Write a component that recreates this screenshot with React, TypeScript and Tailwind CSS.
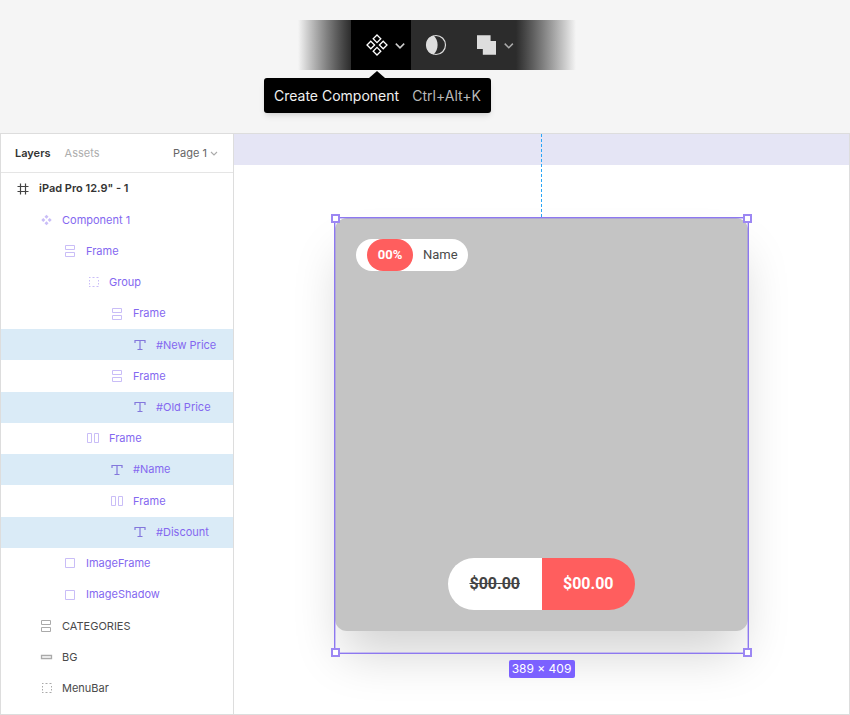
import React from "react";

type Kind = "hash" | "component" | "rows" | "cols" | "group" | "text" | "rect" | "bar";

type Layer = {
  name: string;
  kind: Kind;
  indent: string;
  tone: "frame" | "purple" | "plain";
  selected?: boolean;
};

const D0 = "pl-[14px]";
const D1 = "pl-[37px]";
const D2 = "pl-[61px]";
const D3 = "pl-[84px]";
const D4 = "pl-[108px]";
const D5 = "pl-[131px]";

const layers: Layer[] = [
  { name: 'iPad Pro 12.9" - 1', kind: "hash", indent: D0, tone: "frame" },
  { name: "Component 1", kind: "component", indent: D1, tone: "purple" },
  { name: "Frame", kind: "rows", indent: D2, tone: "purple" },
  { name: "Group", kind: "group", indent: D3, tone: "purple" },
  { name: "Frame", kind: "rows", indent: D4, tone: "purple" },
  { name: "#New Price", kind: "text", indent: D5, tone: "purple", selected: true },
  { name: "Frame", kind: "rows", indent: D4, tone: "purple" },
  { name: "#Old Price", kind: "text", indent: D5, tone: "purple", selected: true },
  { name: "Frame", kind: "cols", indent: D3, tone: "purple" },
  { name: "#Name", kind: "text", indent: D4, tone: "purple", selected: true },
  { name: "Frame", kind: "cols", indent: D4, tone: "purple" },
  { name: "#Discount", kind: "text", indent: D5, tone: "purple", selected: true },
  { name: "ImageFrame", kind: "rect", indent: D2, tone: "purple" },
  { name: "ImageShadow", kind: "rect", indent: D2, tone: "purple" },
  { name: "CATEGORIES", kind: "rows", indent: D1, tone: "plain" },
  { name: "BG", kind: "bar", indent: D1, tone: "plain" },
  { name: "MenuBar", kind: "group", indent: D1, tone: "plain" },
];

function LayerIcon({ kind }: { kind: Kind }) {
  return (
    <svg className="size-4 shrink-0" viewBox="0 0 16 16" fill="none" stroke="currentColor" aria-hidden="true">
      {kind === "hash" && <path d="M5.5 2.5v11M10.5 2.5v11M2.5 5.5h11M2.5 10.5h11" strokeWidth="1.2" />}
      {kind === "component" && (
        <path
          d="M8.5 2.8l2 2-2 2-2-2zM8.5 9.2l2 2-2 2-2-2zM5.3 6l2 2-2 2-2-2zM11.7 6l2 2-2 2-2-2z"
          fill="currentColor"
          stroke="none"
        />
      )}
      {kind === "rows" && <path d="M3.5 2.5h9v4h-9zM3.5 9.5h9v4h-9z" />}
      {kind === "cols" && <path d="M2.5 3.5h4v9h-4zM9.5 3.5h4v9h-4z" />}
      {kind === "group" && (
        <path d="M4 3.5h1.5M7.5 3.5h2M11.5 3.5h2M4 12.5h1.5M7.5 12.5h2M11.5 12.5h2M4.5 6v1.5M4.5 9v1.5M13.5 6v1.5M13.5 9v1.5" />
      )}
      {kind === "text" && <path d="M3 6V3.5h10V6M8 3.5v9M5.500 12.5h5" strokeWidth="1.2" />}
      {kind === "rect" && <path d="M3.5 3.5h9v9h-9z" />}
      {kind === "bar" && <path d="M3.5 6.5h10v3h-10z" strokeWidth="1.3" />}
    </svg>
  );
}

function Chevron({ className }: { className: string }) {
  return (
    <svg className={className} viewBox="0 0 10 10" fill="none" stroke="currentColor" aria-hidden="true">
      <path d="M2 4l3 3 3-3" strokeWidth="1.1" />
    </svg>
  );
}

function LayerRow({ layer }: { layer: Layer }) {
  const purple = layer.tone === "purple";
  const iconColor = layer.tone === "frame" ? "text-[#444444]" : !purple ? "text-[#aaaaaa]" : layer.selected ? "text-[#8377dc]" : "text-[#c9bdf7]";
  const textColor = layer.tone === "frame" ? "font-semibold text-[#333333]" : purple ? "text-[#8468f0]" : "text-[#4a4a4a]";
  return (
    <li className={`flex flex-1 ${layer.selected ? "bg-[#daebf7]" : ""}`}>
      <button type="button" className={`flex w-full items-center gap-2 text-left text-[11px] ${layer.indent}`}>
        <span className={iconColor}>
          <LayerIcon kind={layer.kind} />
        </span>
        <span className={textColor}>{layer.name}</span>
      </button>
    </li>
  );
}

function Toolbar() {
  return (
    <div className="relative flex h-[50px] w-[278px]">
      <div className="w-[53px] bg-linear-to-r from-[#f5f5f5] to-[#2c2c2c]" />
      <button type="button" aria-label="Create component" className="flex w-[60px] items-center gap-1 bg-black pl-[14px] text-white">
        <svg className="size-6" viewBox="0 0 24 24" fill="none" stroke="currentColor" strokeWidth="1.3" aria-hidden="true">
          <path d="M12 2l3.8 3.8L12 9.6 8.2 5.8zM12 14.4l3.8 3.8L12 22l-3.8-3.8zM5.8 8.2L9.6 12l-3.8 3.8L2 12zM18.2 8.2L22 12l-3.8 3.8L14.4 12z" />
        </svg>
        <Chevron className="size-[14px] text-[#cccccc]" />
      </button>
      <button type="button" aria-label="Use as mask" className="flex w-[50px] items-center justify-center bg-[#2c2c2c] text-[#dddddd]">
        <svg className="size-[22px]" viewBox="0 0 22 22" fill="none" aria-hidden="true">
          <circle cx="11" cy="11" r="9.5" stroke="currentColor" strokeWidth="1.2" />
          <path d="M8.5 1.5C14 6 14 16 8.5 20.5A9.9 9.9 0 0 1 8.5 1.5z" fill="currentColor" />
        </svg>
      </button>
      <button type="button" aria-label="Union selection" className="flex w-[55px] items-center gap-[6px] bg-[#2c2c2c] pl-4 text-[#dddddd]">
        <svg className="size-5" viewBox="0 0 20 20" aria-hidden="true">
          <path d="M0 0h14v6h6v14H6v-6H0z" fill="currentColor" />
        </svg>
        <Chevron className="size-[14px] text-[#aaaaaa]" />
      </button>
      <div className="flex-1 bg-linear-to-r from-[#2c2c2c] to-[#f5f5f5]" />
      <div
        role="tooltip"
        className="absolute top-[58px] -left-[34px] flex h-[35px] w-[227px] items-center justify-between rounded-[3px] bg-black px-[10px] text-sm whitespace-nowrap shadow-md"
      >
        <svg className="absolute -top-[7px] left-[105px] h-[7px] w-4" viewBox="0 0 16 7" aria-hidden="true">
          <path d="M8 0l8 7H0z" fill="black" />
        </svg>
        <span className="text-[#f0f0f0]">Create Component</span>
        <span className="text-[#b8b8b8]">Ctrl+Alt+K</span>
      </div>
    </div>
  );
}

function LayersPanel() {
  return (
    <aside className="flex w-[233px] shrink-0 flex-col border-r border-[#dddddd] bg-white">
      <div className="flex h-[39px] shrink-0 items-center border-b border-[#e5e5e5] px-[14px] text-[11px]">
        <button type="button" className="font-semibold text-[#333333]">Layers</button>
        <button type="button" className="ml-[14px] text-[#adadad]">Assets</button>
        <button type="button" className="ml-auto flex items-center gap-[2px] text-[#666666]">
          Page 1
          <Chevron className="size-[10px] text-[#aaaaaa]" />
        </button>
      </div>
      <ul className="mb-[10px] flex flex-1 flex-col">
        {layers.map((layer, i) => (
          <LayerRow key={i} layer={layer} />
        ))}
      </ul>
    </aside>
  );
}

function Card() {
  return (
    <div className="flex h-[413px] flex-col items-start justify-between rounded-xl bg-[#c4c4c4] p-[21px] font-[Roboto,sans-serif] shadow-[0_30px_50px_-8px_rgba(0,0,0,0.18)]">
      <div className="flex h-8 items-center rounded-full bg-white pr-[10px] pl-[11px] text-[13px]">
        <span className="flex h-8 w-[46px] items-center justify-center rounded-full bg-[#ff5e5e] font-bold text-white">00%</span>
        <span className="ml-[10px] text-[#4a4a4a]">Name</span>
      </div>
      <div className="flex h-[52px] w-[187px] self-center overflow-hidden rounded-full text-base font-bold">
        <span className="flex flex-1 items-center justify-center bg-white text-[#444444] line-through">$00.00</span>
        <span className="flex flex-1 items-center justify-center bg-[#ff5e5e] text-white">$00.00</span>
      </div>
    </div>
  );
}

const handle = "absolute size-[9px] border-2 border-[#9c87f3] bg-white";

function Canvas() {
  return (
    <main className="flex min-w-0 flex-1 flex-col overflow-hidden bg-white">
      <div className="relative h-[31px] shrink-0 bg-[#e5e5f5]">
        <div className="absolute top-0 left-1/2 -ml-px h-[83px] w-px bg-[repeating-linear-gradient(to_bottom,#2aa5f5_0px,#2aa5f5_3px,transparent_3px,transparent_5px)]" />
      </div>
      <div className="flex flex-col items-center pt-[52px]">
        <div className="relative h-[437px] w-[415px] p-px">
          <Card />
          <div className="absolute inset-0 border border-[#8d78f0] shadow-[inset_0_0_0_1px_rgba(141,120,240,0.4)]" />
          <div className={`${handle} -top-[3px] -left-[3px]`} />
          <div className={`${handle} -top-[3px] -right-[3px]`} />
          <div className={`${handle} -bottom-[3px] -left-[3px]`} />
          <div className={`${handle} -right-[3px] -bottom-[3px]`} />
        </div>
        <div className="relative mt-[6px] flex h-[18px] w-[66px] items-center justify-center rounded-[2px] bg-[#7b61ff] text-xs whitespace-nowrap text-white">
          389 × 409
        </div>
      </div>
    </main>
  );
}

export default function App() {
  return (
    <div className="flex min-h-screen flex-col bg-[#f5f5f5] font-[Inter,sans-serif]">
      <header className="flex h-[133px] shrink-0 justify-center pt-5 pl-6">
        <Toolbar />
      </header>
      <div className="flex flex-1 border border-[#dddddd]">
        <LayersPanel />
        <Canvas />
      </div>
    </div>
  );
}
